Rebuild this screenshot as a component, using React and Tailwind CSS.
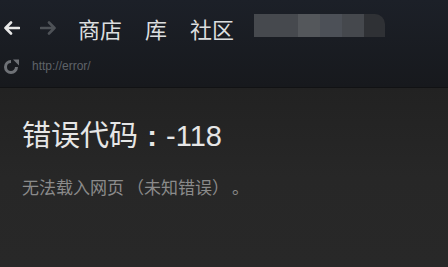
import React from "react";

const cjk = { fontFamily: '"Noto Sans CJK SC", "Noto Sans", sans-serif' };
const latin = { fontFamily: '"Liberation Sans", Arial, sans-serif' };

function Arrow({ dir = "left", className = "" }) {
  return (
    <svg width="17" height="14" viewBox="0 0 17 14" className={className} fill="none">
      {dir === "left" ? (
        <path d="M16 7H2.5M8 1.5L2.5 7L8 12.5" stroke="currentColor" strokeWidth="2.6" strokeLinecap="round" strokeLinejoin="round" />
      ) : (
        <path d="M1 7h13.5M9 1.5L14.5 7L9 12.5" stroke="currentColor" strokeWidth="2.6" strokeLinecap="round" strokeLinejoin="round" />
      )}
    </svg>
  );
}

export default function App() {
  return (
    <div className="w-[448px] h-[267px] overflow-hidden flex flex-col bg-[#282828]" style={cjk}>
      {/* top bar */}
      <div className="h-[88px] shrink-0 flex flex-col bg-gradient-to-b from-[#1c2028] to-[#17191d] border-b border-[#111214]">
        <div className="flex items-center h-[56px] pl-[3px]">
          <Arrow dir="left" className="text-[#e8e8e8]" />
          <Arrow dir="right" className="text-[#4e5257] ml-[20px]" />
          <nav className="flex items-center ml-[21px] text-[22px] leading-none text-[#dcdedf] gap-[23px]">
            <span>商店</span>
            <span>库</span>
            <span>社区</span>
          </nav>
          <div className="flex ml-[20px] h-[23px] mt-[-6px]">
            <div className="w-[44px] bg-[#46494e]" />
            <div className="w-[22px] bg-[#54575b]" />
            <div className="w-[22px] bg-[#4c5057]" />
            <div className="w-[22px] bg-[#45484d]" />
            <div className="w-[21px] bg-[#2f3135] rounded-tr-[10px]" />
          </div>
        </div>
        <div className="flex items-center pl-[2px] h-[20px]">
          <svg width="18" height="17" viewBox="0 0 18 17" fill="none" className="text-[#6e7176]">
            <path d="M9 3.5A5.5 5.5 0 1 0 14.5 9" stroke="currentColor" strokeWidth="3" strokeLinecap="butt" />
            <path d="M11 1.5H17V7.5Z" fill="currentColor" />
          </svg>
          <span className="ml-[12px] text-[12px] text-[#5f6369]" style={latin}>
            http://error/
          </span>
        </div>
      </div>
      {/* content */}
      <div className="flex-1 bg-gradient-to-b from-[#222222] via-[#272727] to-[#282828] px-[22px] pt-[27px] [text-spacing-trim:space-all]">
        <h1 className="flex items-baseline text-[29px] leading-[36px] text-[#e6e6e6]">
          <span>错误代码</span>
          <span className="inline-block w-[28px] text-center font-bold" style={latin}>:</span>
          <span style={latin}>-118</span>
        </h1>
        <p className="mt-[22px] text-[17px] leading-[22px] text-[#8b8b8b]">
          无法载入网页<span className="inline-block w-[20px] text-right">（</span>未知错误<span className="inline-block w-[20px] text-left">）</span>。
        </p>
      </div>
    </div>
  );
}
